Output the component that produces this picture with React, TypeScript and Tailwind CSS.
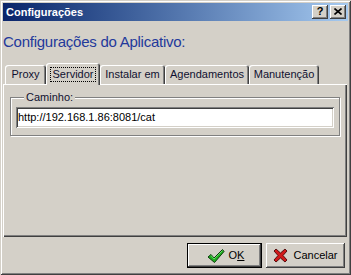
import React from 'react';

const raised =
  'shadow-[inset_-1px_-1px_0_#404040,inset_1px_1px_0_#ffffff,inset_-2px_-2px_0_#808080]';

function CheckIcon() {
  return (
    <svg width="18" height="16" viewBox="0 0 18 16">
      <path
        d="M1 9 L4 6.5 L7 10 L15.5 1.5 L17 3.5 L7.5 14.5 Z"
        fill="#1fae1f"
        stroke="#0b3d0b"
        strokeWidth="1"
        strokeLinejoin="round"
      />
      <path d="M4 7.5 L7 11 L15.5 2.5" fill="none" stroke="#7ee27e" strokeWidth="0.8" />
    </svg>
  );
}

function CrossIcon() {
  return (
    <svg width="15" height="15" viewBox="0 0 15 15">
      <path
        d="M1 3 L3 1 L7.5 5 L12 1 L14 3 L10 7.5 L14 12 L12 14 L7.5 10 L3 14 L1 12 L5 7.5 Z"
        fill="#d11a1a"
        stroke="#4a0505"
        strokeWidth="0.9"
        strokeLinejoin="round"
      />
    </svg>
  );
}

function Tab({ label, width, active }: { label: string; width: string; active?: boolean }) {
  if (active) {
    return (
      <div
        className={`${width} h-[22px] -mb-px relative z-10 bg-[#d4d0c8] rounded-t-[3px] shadow-[inset_1px_1px_0_#ffffff,inset_-1px_0_0_#404040,inset_-2px_0_0_#808080] flex justify-center pt-[4px]`}
      >
        <span className="h-[15px] px-[2px] border border-dotted border-black leading-[13px]">{label}</span>
      </div>
    );
  }
  return (
    <div
      className={`${width} h-[19px] rounded-t-[3px] shadow-[inset_1px_1px_0_#ffffff,inset_-1px_0_0_#404040,inset_-2px_0_0_#808080] flex justify-center pt-[3px] leading-[13px]`}
    >
      {label}
    </div>
  );
}

export default function App() {
  return (
    <div className="w-[351px] h-[275px] bg-[#d4d0c8] p-[3px] flex flex-col font-['Liberation_Sans',Arial,sans-serif] text-[11px] text-[#101030] shadow-[inset_1px_1px_0_#d4d0c8,inset_-1px_-1px_0_#404040,inset_2px_2px_0_#ffffff,inset_-2px_-2px_0_#808080]">
      {/* Title bar */}
      <div className="h-[18px] flex items-center bg-gradient-to-r from-[#0a246a] to-[#a6caf0] pl-[3px] pr-[2px]">
        <span className="flex-1 text-white font-bold leading-[13px]">Configurações</span>
        <div className="flex gap-[2px]">
          <div className={`w-[16px] h-[14px] bg-[#d4d0c8] ${raised} flex items-center justify-center text-black font-bold text-[11px] leading-none pb-px`}>
            ?
          </div>
          <div className={`w-[16px] h-[14px] bg-[#d4d0c8] ${raised} flex items-center justify-center pb-px`}>
            <svg width="8" height="7" viewBox="0 0 8 7">
              <path d="M0.5 0.5 L7.5 6.5 M7.5 0.5 L0.5 6.5" stroke="#000" strokeWidth="1.6" />
            </svg>
          </div>
        </div>
      </div>

      {/* Heading */}
      <div className="h-[42px] pt-[12px] text-[15px] leading-[18px] tracking-[-0.25px] text-[#23399b]">
        Configurações do Aplicativo:
      </div>

      {/* Tabs */}
      <div className="h-[21px] flex items-end pl-[2px]">
        <Tab label="Proxy" width="w-[41px]" />
        <Tab label="Servidor" width="w-[54px]" active />
        <Tab label="Instalar em" width="w-[65px]" />
        <Tab label="Agendamentos" width="w-[84px]" />
        <Tab label="Manutenção" width="w-[70px]" />
      </div>

      {/* Tab panel */}
      <div className="h-[153px] w-[344px] pt-[7px] pl-[7px] pr-[6px] shadow-[inset_1px_1px_0_#ffffff,inset_-1px_-1px_0_#404040,inset_-2px_-2px_0_#808080]">
        <fieldset className="w-[330px] border border-[#808080] shadow-[inset_1px_1px_0_#ffffff,1px_1px_0_#ffffff] px-[5px] pb-[7px]">
          <legend className="ml-[8px] px-[2px] bg-[#d4d0c8] leading-[13px]">Caminho:</legend>
          <div className="mt-[3px] h-[21px] w-[318px] bg-white flex items-center pl-[2px] text-black shadow-[inset_1px_1px_0_#808080,inset_-1px_-1px_0_#ffffff,inset_2px_2px_0_#404040,inset_-2px_-2px_0_#d4d0c8]">
            http://192.168.1.86:8081/cat
          </div>
        </fieldset>
      </div>

      {/* Buttons */}
      <div className="flex justify-end gap-[4px] pt-[6px] pr-[3px]">
        <div className="w-[75px] h-[25px] border border-black">
          <div className={`w-full h-full ${raised} flex items-center justify-center gap-[4px] pl-[2px]`}>
            <CheckIcon />
            <span className="text-black">
              O<span className="underline">K</span>
            </span>
          </div>
        </div>
        <div className={`w-[79px] h-[25px] ${raised} flex items-center justify-center gap-[5px]`}>
          <CrossIcon />
          <span className="text-black">Cancelar</span>
        </div>
      </div>
    </div>
  );
}
